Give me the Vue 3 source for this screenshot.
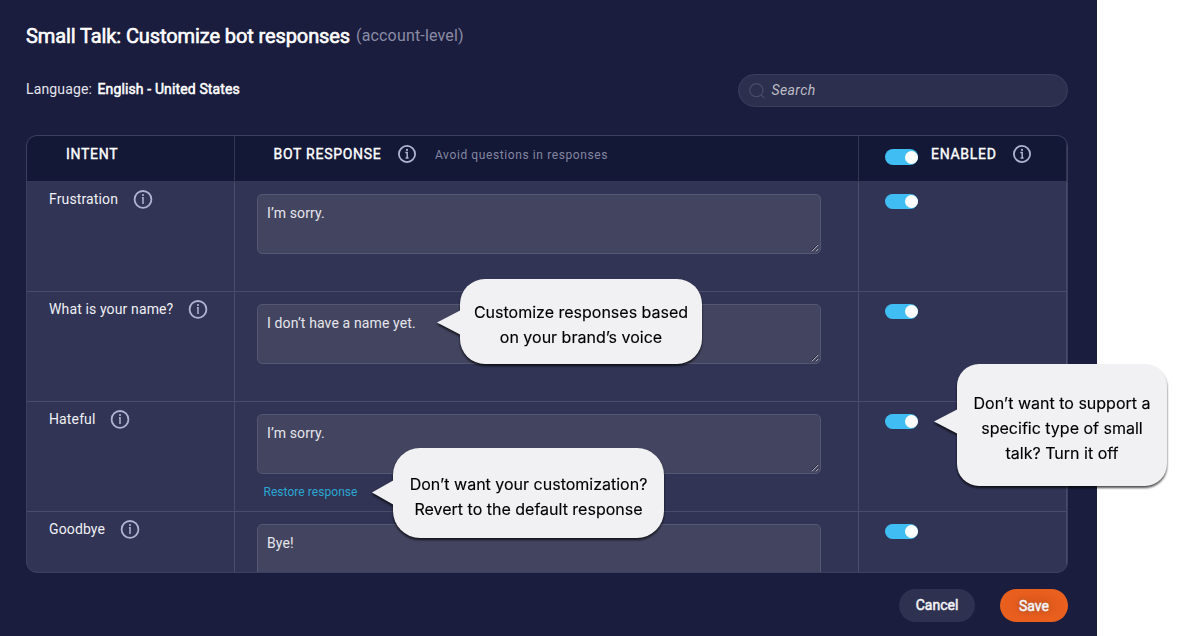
<script setup>
const rows = [
  { intent: 'Frustration', response: 'I’m sorry.', restore: false },
  { intent: 'What is your name?', response: 'I don’t have a name yet.', restore: false },
  { intent: 'Hateful', response: 'I’m sorry.', restore: true },
  { intent: 'Goodbye', response: 'Bye!', restore: false },
]
</script>

<template>
  <div class="page">
    <main class="panel">
      <h1 class="title"><span class="title-main">Small Talk: Customize bot responses</span><span class="title-sub">(account-level)</span></h1>

      <div class="toolbar">
        <div class="language"><span class="lang-label">Language:</span><span class="lang-value">English - United States</span></div>
        <div class="search">
          <svg width="16" height="16" viewBox="0 0 16 16" fill="none" stroke="#4b4d6c" stroke-width="1.1">
            <circle cx="7.4" cy="7.2" r="6.6" />
            <path d="M12 12l3.5 3.2" />
          </svg>
          <span class="placeholder">Search</span>
        </div>
      </div>

      <section class="table">
        <div class="row head">
          <div class="cell c-intent"><span class="th">INTENT</span></div>
          <div class="cell c-response">
            <span class="th">BOT RESPONSE</span>
            <svg class="info" viewBox="0 0 20 20"><circle cx="10" cy="10" r="8.1" /><path d="M8.3 8.5h1.9v5.6M8.6 14.1h3" class="thin" /><circle cx="10" cy="5.9" r="1.1" class="dot" /></svg>
            <span class="hint">Avoid questions in responses</span>
          </div>
          <div class="cell c-enabled">
            <span class="toggle tall"></span>
            <span class="th">ENABLED</span>
            <svg class="info" viewBox="0 0 20 20"><circle cx="10" cy="10" r="8.1" /><path d="M8.3 8.5h1.9v5.6M8.6 14.1h3" class="thin" /><circle cx="10" cy="5.9" r="1.1" class="dot" /></svg>
          </div>
        </div>

        <div v-for="r in rows" :key="r.intent" class="row">
          <div class="cell c-intent">
            <span class="intent">{{ r.intent }}</span>
            <svg class="info" viewBox="0 0 20 20"><circle cx="10" cy="10.4" r="8.4" /><path d="M9 8.7h1v6.3" class="thin" /><circle cx="10" cy="6" r="1.1" class="dot" /></svg>
          </div>
          <div class="cell c-response">
            <div class="field">
              <span>{{ r.response }}</span>
              <svg class="grip" width="8" height="8" viewBox="0 0 8 8" fill="none">
                <path d="M0.5 6.5L6.5 0.5M4.5 6.5L6.5 4.5" stroke="#22243a" />
                <path d="M0.9 7.3L7.3 0.9M4.9 7.3L7.3 4.9" stroke="#c9cad3" stroke-width=".9" />
              </svg>
            </div>
            <a v-if="r.restore" class="restore">Restore response</a>
          </div>
          <div class="cell c-enabled"><span class="toggle"></span></div>
        </div>
      </section>

      <footer class="actions">
        <button class="btn cancel">Cancel</button>
        <button class="btn save">Save</button>
      </footer>
    </main>

    <aside class="callout voice"><span>Customize responses based</span><span>on your brand’s voice</span></aside>
    <aside class="callout revert"><span>Don’t want your customization?</span><span>Revert to the default response</span></aside>
    <aside class="callout off"><span>Don’t want to support a</span><span>specific type of small</span><span>talk? Turn it off</span></aside>
  </div>
</template>

<style>
body { margin: 0; background: #fff; }
</style>

<style scoped>
* { box-sizing: border-box; }
.page { position: relative; width: 1181px; height: 636px; overflow: hidden; background: #fff; font-family: Roboto, "Liberation Sans", sans-serif; }
.panel { width: 1097px; height: 636px; padding: 22px 29px 0 26px; background: #1b1d3e; color: #fff; }
.title { display: flex; height: 28px; margin: 0; line-height: 28px; font-weight: 400; white-space: nowrap; }
.title-main { width: 330px; font-size: 20px; letter-spacing: -.1px; -webkit-text-stroke: .6px #fff; }
.title-sub { font-size: 16px; line-height: 27px; color: #8a8ca5; letter-spacing: .17px; }

.toolbar { display: flex; justify-content: space-between; margin-top: 24px; }
.language { display: flex; height: 31px; line-height: 31px; font-size: 14px; white-space: nowrap; }
.lang-label { width: 71.5px; color: #e4e5ec; letter-spacing: .15px; }
.lang-value { letter-spacing: .13px; -webkit-text-stroke: .5px #fff; }
.search { display: flex; align-items: center; width: 330px; height: 33px; padding-left: 10px; border: 1px solid #3c3f5c; border-radius: 17px; background: #2d2f4f; }
.placeholder { position: relative; top: -1px; margin-left: 6.5px; font-size: 14px; font-style: italic; letter-spacing: .4px; color: #bdbec5; }

.table { width: 1042px; height: 438px; margin-top: 28px; border: 1px solid #3c3f60; border-radius: 11px; background: #313454; overflow: hidden; }
.row { display: flex; width: 1040px; height: 110px; border-bottom: 1px solid #4a4c69; }
.row.head { height: 46px; background: #131837; border-color: #343753; }
.cell { display: flex; align-items: flex-start; border-right: 1px solid #4a4c69; white-space: nowrap; }
.head .cell { border-color: #343753; }
.c-intent { width: 208px; padding: 8px 0 0 22px; }
.c-response { width: 624px; padding: 12px 0 0 22px; flex-direction: column; }
.c-enabled { width: 208px; padding: 12px 0 0 26px; }
.head .c-intent { padding: 9px 0 0 39px; }
.head .c-response { padding: 9px 0 0 38.5px; flex-direction: row; }
.head .c-enabled { padding: 9px 0 0 26px; }
.th { font-size: 14px; line-height: 18px; letter-spacing: .72px; -webkit-text-stroke: .4px #fff; }
.hint { margin-left: 18px; font-size: 12px; line-height: 20px; letter-spacing: .6px; color: #8486a0; }
.intent { font-size: 14px; line-height: 18px; letter-spacing: .13px; color: #f0f0f5; }
.info { flex: none; width: 20px; height: 20px; margin: -1px 0 0 14.7px; fill: none; stroke: #aeb4d0; stroke-width: 1.8; }
.head .info { margin-left: 15.5px; }
.info .thin { stroke-width: 1.5; }
.info .dot { fill: #aeb4d0; stroke: none; }
.field { position: relative; width: 564px; height: 60px; flex: none; padding: 9px; border: 1px solid #545771; border-radius: 5px; background: #434560; font-size: 14px; line-height: 18px; letter-spacing: .12px; color: #e6e6ec; }
.grip { position: absolute; right: 1px; bottom: 1px; }
.restore { margin: 10px 0 0 6.5px; font-size: 12px; line-height: 16px; letter-spacing: .05px; color: #2ba6d3; }
.toggle { display: flex; flex: none; justify-content: flex-end; align-items: center; width: 33px; height: 15px; padding-right: .5px; border-radius: 8px; background: #40bdf2; }
.toggle::after { content: ""; width: 13px; height: 13px; border-radius: 50%; background: #fff; }
.toggle.tall { height: 16px; margin: 4px 13px 0 0; }

.actions { display: flex; justify-content: flex-end; gap: 25px; margin-top: 16px; }
.btn { height: 33px; padding: 0; border: 0; border-radius: 17px; font: 400 14px/33px Roboto, "Liberation Sans", sans-serif; color: #f4f4f7; -webkit-text-stroke: .5px #f4f4f7; }
.cancel { width: 76px; background: #2f3151; }
.save { width: 68px; line-height: 35px; background: radial-gradient(ellipse at center, #db561b 0%, #e95f1e 65%); text-shadow: 0 0 4px #8a5a40; }

.callout { position: absolute; display: flex; flex-direction: column; justify-content: center; align-items: center; background: #f1f1f3; color: #000; font: 400 16px/25px Inter, sans-serif; white-space: nowrap; -webkit-text-stroke: .15px #000; filter: drop-shadow(.5px 2.5px 1px rgba(0, 0, 0, .7)); }
.callout::before { content: ""; position: absolute; right: calc(100% - 1px); width: 24px; height: 25px; background: inherit; clip-path: polygon(0 50%, 100% 0, 100% 100%); }
.voice { left: 460px; top: 279px; width: 242px; height: 85px; padding-top: 7px; border-radius: 25px; }
.voice::before { top: 31px; }
.revert { left: 393px; top: 448px; width: 271px; height: 90px; padding-top: 8px; border-radius: 27px; }
.revert::before { top: 32px; width: 22px; }
.off { left: 957px; top: 364px; width: 210px; height: 122px; padding-top: 6px; border-radius: 22px; }
.off::before { top: 45px; }
</style>
